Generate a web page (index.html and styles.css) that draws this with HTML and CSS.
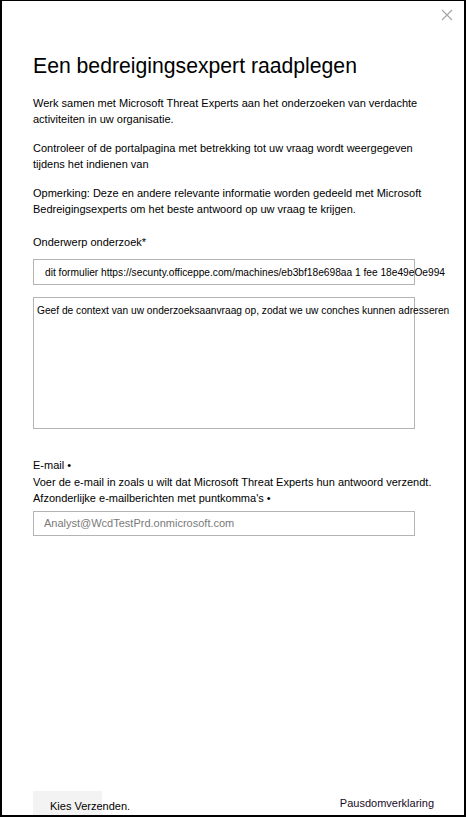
FILE: index.html
```html
<!DOCTYPE html>
<html lang="nl">
<head>
<meta charset="utf-8">
<link rel="stylesheet" href="styles.css">
</head>
<body>
<div class="panel">
  <div class="close" aria-label="Sluiten">
    <svg width="12" height="12" viewBox="0 0 12 12"><path d="M1 1L11 11M11 1L1 11" stroke="#a6a6a6" stroke-width="1.2" fill="none"/></svg>
  </div>
  <h1 class="title">Een bedreigingsexpert raadplegen</h1>
  <p class="para">Werk samen met Microsoft Threat Experts aan het onderzoeken van verdachte activiteiten in uw organisatie.</p>
  <p class="para">Controleer of de portalpagina met betrekking tot uw vraag wordt weergegeven tijdens het indienen van</p>
  <p class="para">Opmerking: Deze en andere relevante informatie worden gedeeld met Microsoft Bedreigingsexperts om het beste antwoord op uw vraag te krijgen.</p>
  <div class="label">Onderwerp onderzoek*</div>
  <div class="input subject"><span>dit formulier https://secunty.officeppe.com/machines/eb3bf18e698aa 1 fee 18e49eOe994</span></div>
  <div class="textarea">Geef de context van uw onderzoeksaanvraag op, zodat we uw conches kunnen adresseren</div>
  <div class="email-block">
    <div class="label-line">E-mail •</div>
    <div class="label-line">Voer de e-mail in zoals u wilt dat Microsoft Threat Experts hun antwoord verzendt.</div>
    <div class="label-line">Afzonderlijke e-mailberichten met puntkomma's •</div>
  </div>
  <div class="input email">Analyst@WcdTestPrd.onmicrosoft.com</div>
  <div class="footer">
    <div class="btn">Kies Verzenden.</div>
    <div class="privacy">Pausdomverklaring</div>
  </div>
</div>
</body>
</html>
```
FILE: styles.css
```css
html, body {
  margin: 0;
  padding: 0;
  background: #fff;
}
.panel {
  box-sizing: border-box;
  width: 466px;
  height: 817px;
  border: 2px solid #000;
  border-top-width: 1px;
  padding: 0 20px 0 31px;
  display: flex;
  flex-direction: column;
  font-family: "Liberation Sans", Arial, sans-serif;
  font-size: 11px;
  color: #000;
  position: relative;
  overflow: hidden;
}
.close {
  position: absolute;
  top: 8px;
  right: 11px;
  width: 12px;
  height: 12px;
}
.title {
  margin: 50px 0 0 0;
  font-weight: 400;
  font-size: 21.2px;
  line-height: 30px;
}
.para {
  margin: 0;
  line-height: 16px;
  max-width: 395px;
}
.title + .para { margin-top: 14px; }
.para + .para { margin-top: 13px; }
.label {
  margin-top: 17px;
  line-height: 16px;
}
.input {
  box-sizing: border-box;
  width: 382px;
  border: 1px solid #b4b4b4;
  height: 26px;
  display: flex;
  align-items: center;
  white-space: nowrap;
}
.subject {
  margin-top: 9px;
  padding-left: 11px;
  overflow: visible;
  font-size: 10.2px;
}
.textarea {
  box-sizing: border-box;
  width: 382px;
  margin-top: 12px;
  height: 132px;
  border: 1px solid #b4b4b4;
  padding: 7px 0 0 3px;
  white-space: nowrap;
  font-size: 10.2px;
}
.email-block {
  margin-top: 28px;
}
.label-line {
  line-height: 16.5px;
}
.email {
  margin-top: 4px;
  padding-left: 10px;
  color: #7a7a7a;
  height: 25px;
}
.footer {
  margin-top: auto;
  display: flex;
  justify-content: space-between;
  align-items: flex-end;
}
.btn {
  background: #f3f3f3;
  width: 69px;
  height: 24px;
  box-sizing: border-box;
  padding: 7px 0 0 17px;
  white-space: nowrap;
  line-height: 16px;
}
.privacy {
  margin-bottom: 6px;
  margin-right: 10px;
  color: #1a0a1f;
}
```
